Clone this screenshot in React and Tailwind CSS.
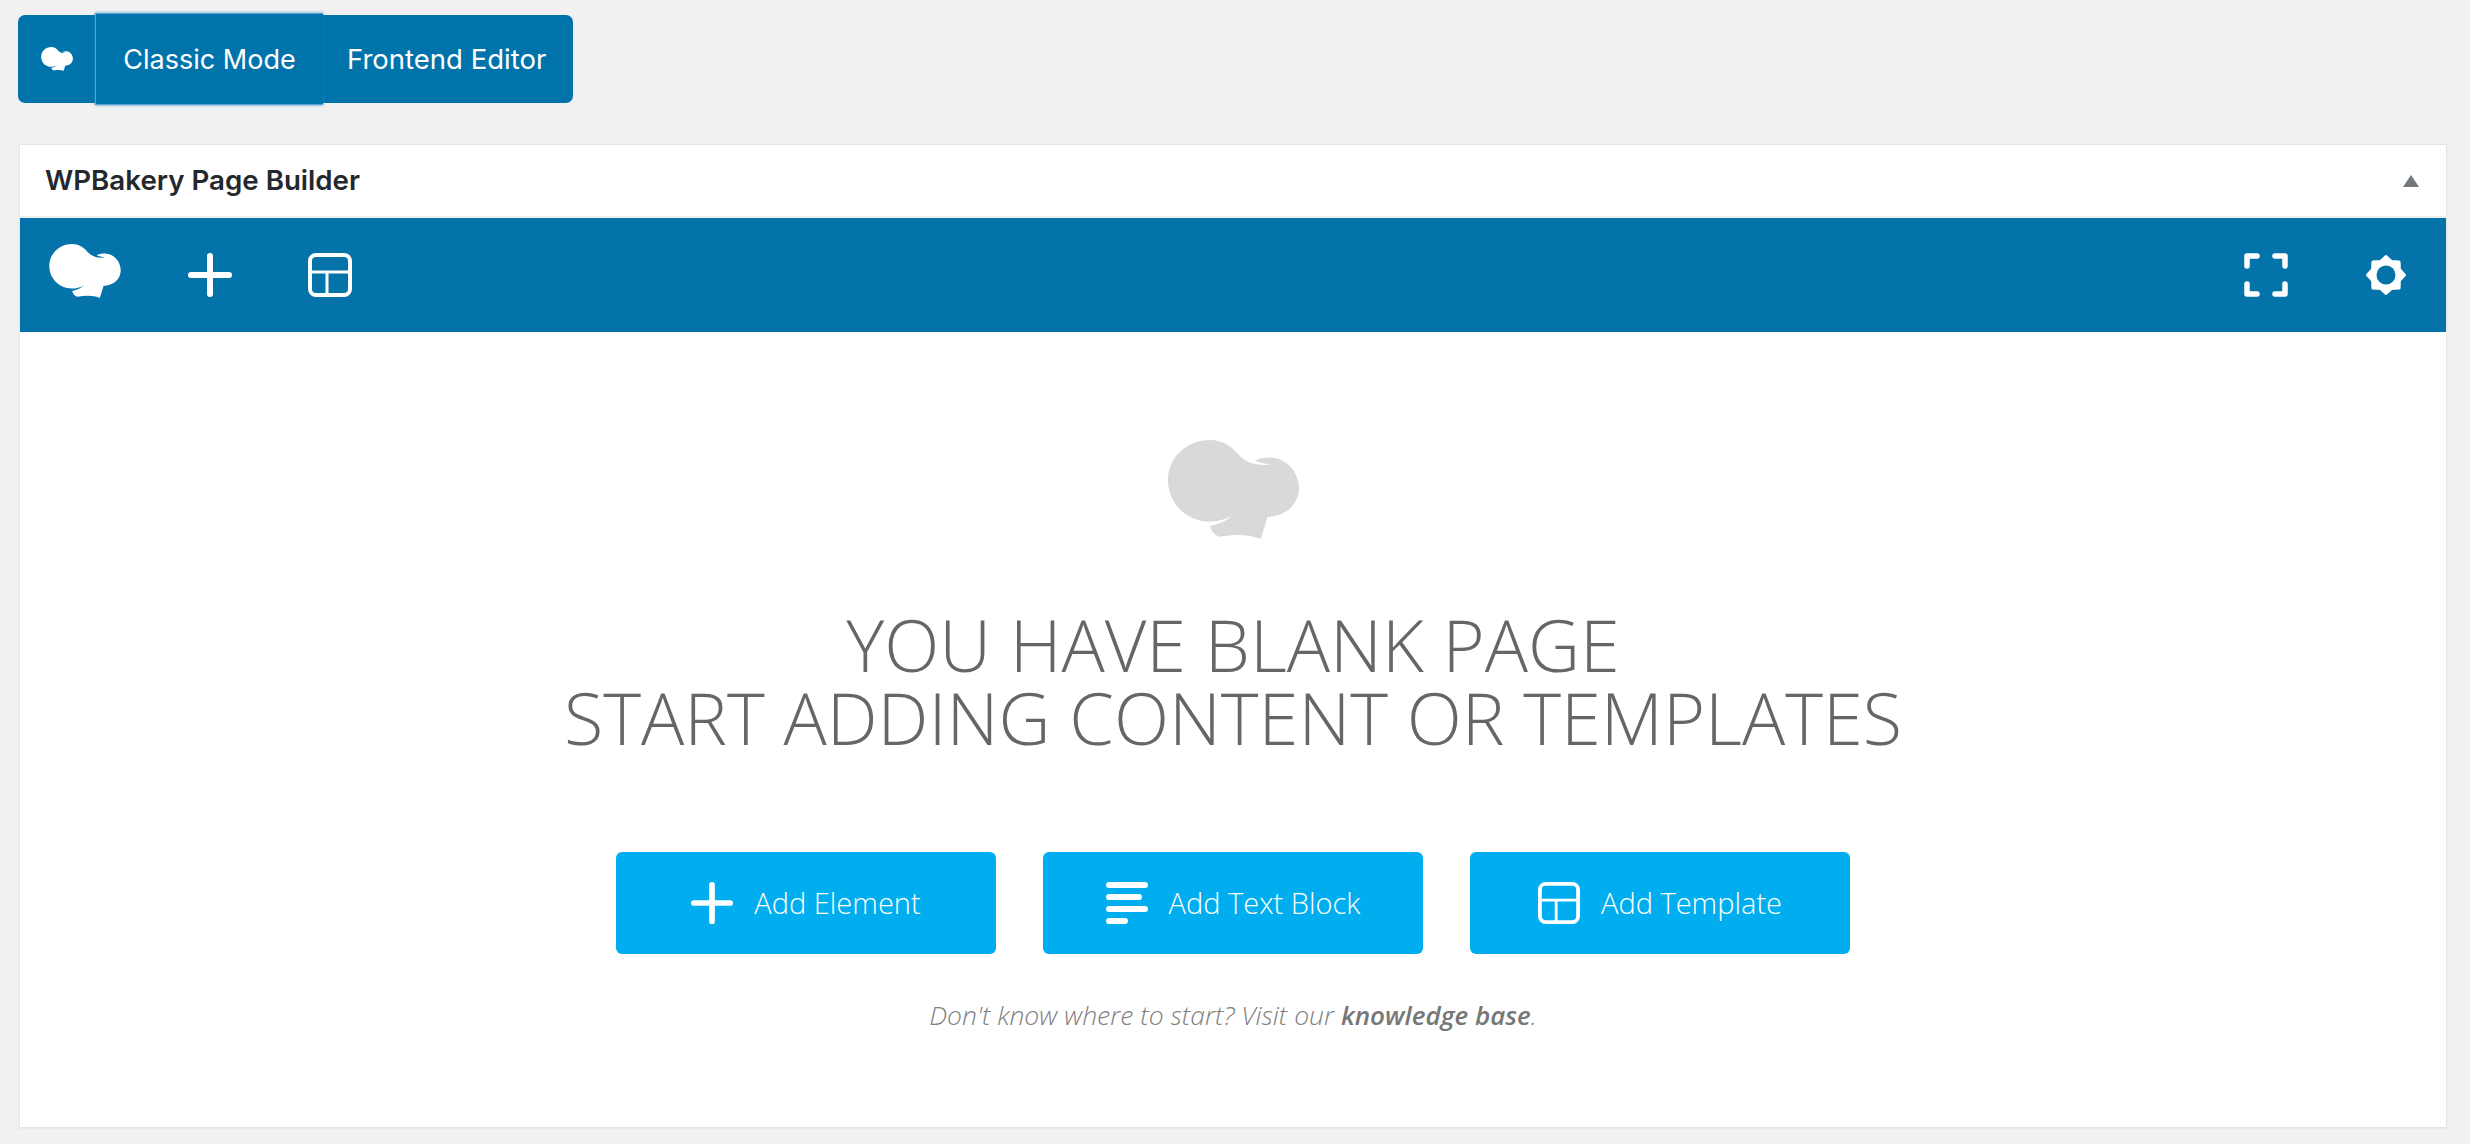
const LOGO_PATH =
  "M110 180C110 110 170 60 235 60C280 60 305 85 325 108C345 128 380 140 418 133C398 131 384 128 370 122C385 114 405 112 425 113C470 118 503 160 503 205C503 255 460 290 409 290L388 357C360 345 320 340 265 350C250 345 240 335 236 318C265 312 285 303 300 288C280 300 255 305 235 305C165 305 110 250 110 180Z";

const Logo = ({ className }) => (
  <svg viewBox="110 60 393 297" className={className} fill="currentColor">
    <path d={LOGO_PATH} />
  </svg>
);

const PlusIcon = ({ className }) => (
  <svg viewBox="0 0 44 44" className={className} fill="none" stroke="currentColor" strokeWidth="6" strokeLinecap="round">
    <path d="M22 3V41M3 22H41" />
  </svg>
);

const LayoutIcon = ({ className }) => (
  <svg viewBox="0 0 44 44" className={className} fill="none" stroke="currentColor">
    <rect x="2" y="2" width="40" height="40" rx="6" strokeWidth="4" />
    <path d="M2 19H42M19 19V42" strokeWidth="3" />
  </svg>
);

const TextIcon = ({ className }) => (
  <svg viewBox="0 0 42 42" className={className} fill="none" stroke="currentColor" strokeWidth="6" strokeLinecap="round">
    <path d="M3 3H39M3 15H33M3 27H39M3 39H19" />
  </svg>
);

const FullscreenIcon = ({ className }) => (
  <svg viewBox="0 0 44 44" className={className} fill="none" stroke="currentColor" strokeWidth="5.5" strokeLinecap="round" strokeLinejoin="round">
    <path d="M3 13V3H13M31 3H41V13M41 31V41H31M13 41H3V31" />
  </svg>
);

const gearPoints = Array.from({ length: 16 }, (_, i) => {
  const a = (i * Math.PI) / 8 - Math.PI / 2;
  const r = i % 2 === 0 ? 18.5 : 14.5;
  return `${20 + r * Math.cos(a)},${20 + r * Math.sin(a)}`;
}).join(" ");

const GearIcon = ({ className }) => (
  <svg viewBox="0 0 40 40" className={className}>
    <polygon points={gearPoints} fill="#fff" stroke="#fff" strokeWidth="3" strokeLinejoin="round" />
    <circle cx="20" cy="20" r="9.5" fill="#0473aa" />
  </svg>
);

const AddButton = ({ icon, label }) => (
  <button className="w-[380px] h-[102px] rounded-[6px] bg-[#00aeef] text-white flex items-center justify-center gap-[21px]">
    {icon}
    <span className="text-[29px] font-light font-['Open_Sans',sans-serif]">{label}</span>
  </button>
);

export default function App() {
  return (
    <div className="min-h-screen bg-[#f1f1f1] pt-[15px] pl-[18px] pr-[23px] font-['Inter',sans-serif]">
      {/* mode switcher */}
      <div className="inline-flex h-[88px] items-stretch rounded-[7px] bg-[#0073aa] text-white text-[27.5px]">
        <div className="w-[77px] flex items-center justify-center">
          <Logo className="w-[32px] h-[24px]" />
        </div>
        <div className="w-[228px] -my-[2px] pt-[2px] flex items-center justify-center text-[27px] bg-[#0073aa] border border-r-0 border-[#5b9dd9] shadow-[0_0_3px_rgba(30,140,190,0.8)]">
          Classic Mode
        </div>
        <div className="w-[250px] pt-[2px] flex items-center pl-[24px]">Frontend Editor</div>
      </div>

      {/* page builder panel */}
      <div className="mt-[41px] h-[984px] ml-[1px] bg-white border border-[#e5e5e5] shadow-[0_1px_1px_rgba(0,0,0,0.04)] flex flex-col">
        <div className="h-[73px] shrink-0 flex items-center justify-between pl-[25px] pr-[27px] border-b-2 border-[#eeeeee]">
          <h2 className="text-[27.7px] pt-[1px] font-semibold text-[#23282d]">WPBakery Page Builder</h2>
          <div className="w-0 h-0 border-l-[8px] border-r-[8px] border-b-[12px] border-l-transparent border-r-transparent border-b-[#72777c]" />
        </div>

        <div className="h-[114px] shrink-0 bg-[#0473aa] text-white flex items-center pl-[29px] pr-[40px]">
          <Logo className="w-[72px] h-[54px] mb-[8px]" />
          <PlusIcon className="w-[44px] h-[44px] ml-[67px]" />
          <LayoutIcon className="w-[44px] h-[44px] ml-[76px]" />
          <FullscreenIcon className="w-[44px] h-[44px] ml-auto" />
          <GearIcon className="w-[40px] h-[40px] ml-[78px]" />
        </div>

        <div className="flex-1 flex flex-col items-center pt-[108px] font-['Open_Sans',sans-serif]">
          <Logo className="w-[131px] h-[99px] text-[#d9d9d9]" />
          <h1 className="mt-[69px] text-center text-[72px] leading-[73px] font-light text-[#666666]">
            YOU HAVE BLANK PAGE
            <br />
            START ADDING CONTENT OR TEMPLATES
          </h1>
          <div className="mt-[98px] flex gap-[47px]">
            <AddButton icon={<PlusIcon className="w-[42px] h-[42px]" />} label="Add Element" />
            <AddButton icon={<TextIcon className="w-[42px] h-[42px]" />} label="Add Text Block" />
            <AddButton icon={<LayoutIcon className="w-[42px] h-[42px]" />} label="Add Template" />
          </div>
          <p className="mt-[42px] text-[26.5px] italic font-light text-[#808080]">
            Don't know where to start? Visit our <b className="text-[26px] font-semibold text-[#777777]">knowledge base</b>.
          </p>
        </div>
      </div>
    </div>
  );
}
